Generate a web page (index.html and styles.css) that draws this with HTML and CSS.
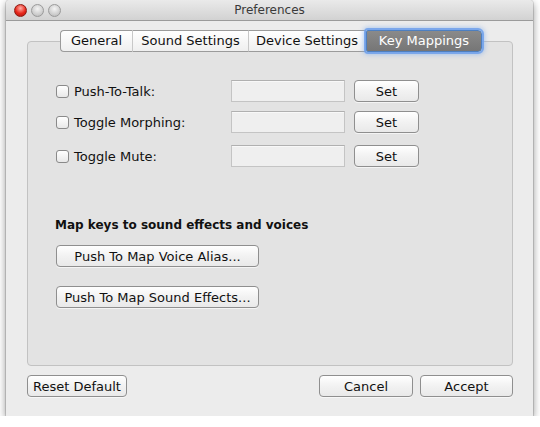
FILE: index.html
```html
<!DOCTYPE html>
<html>
<head>
<meta charset="utf-8">
<link rel="stylesheet" href="styles.css">
</head>
<body>
<div class="window">
  <div class="titlebar">
    <div class="lights">
      <span class="light red"></span>
      <span class="light"></span>
      <span class="light"></span>
    </div>
    <div class="title">Preferences</div>
  </div>
  <div class="content">
    <div class="tabs">
      <div class="tab">General</div>
      <div class="tab">Sound Settings</div>
      <div class="tab">Device Settings</div>
      <div class="tab selected">Key Mappings</div>
    </div>
    <div class="box">
      <div class="row r1">
        <label class="check"><span class="cb"></span>Push-To-Talk:</label>
        <div class="field"></div>
        <button class="btn set">Set</button>
      </div>
      <div class="row r2">
        <label class="check"><span class="cb"></span>Toggle Morphing:</label>
        <div class="field"></div>
        <button class="btn set">Set</button>
      </div>
      <div class="row r3">
        <label class="check"><span class="cb"></span>Toggle Mute:</label>
        <div class="field"></div>
        <button class="btn set">Set</button>
      </div>
      <div class="heading">Map keys to sound effects and voices</div>
      <button class="btn wide b1">Push To Map Voice Alias...</button>
      <button class="btn wide b2">Push To Map Sound Effects...</button>
    </div>
    <div class="footer">
      <button class="btn reset">Reset Default</button>
      <div class="spacer"></div>
      <button class="btn cancel">Cancel</button>
      <button class="btn accept">Accept</button>
    </div>
  </div>
</div>
</body>
</html>
```
FILE: styles.css
```css
* { box-sizing: border-box; }
html, body { margin: 0; padding: 0; background: #ffffff; }
body {
  font-family: "DejaVu Sans", "Liberation Sans", sans-serif;
  font-size: 12px;
  color: #111;
}
.window {
  margin-left: 6px;
  width: 527px;
  height: 416px;
  background: #ececec;
  border-radius: 4px 4px 0 0;
  box-shadow: 0 3px 8px rgba(0,0,0,0.45), 0 0 0 1px rgba(0,0,0,0.12);
  overflow: hidden;
}
.titlebar {
  height: 21px;
  position: relative;
  background: linear-gradient(#eaeaea, #d2d2d2);
  border-bottom: 1px solid #9b9b9b;
  display: flex;
  align-items: center;
}
.lights {
  display: flex;
  gap: 4px;
  margin-left: 8px;
  position: relative;
  z-index: 1;
}
.light {
  width: 13px;
  height: 13px;
  border-radius: 50%;
  background: radial-gradient(circle at 50% 35%, #f4f4f4, #c8c8c8 70%, #b0b0b0);
  border: 1px solid #9a9a9a;
}
.light.red {
  background: radial-gradient(circle at 50% 30%, #ffb0a8, #e8271b 55%, #a8150e);
  border-color: #8c1a12;
}
.title {
  position: absolute;
  left: 0; right: 0; top: 0; bottom: 0;
  display: flex;
  align-items: center;
  justify-content: center;
  color: #3a3a3a;
  font-size: 12px;
}
.content {
  padding: 9px 20px 0 21px;
}
.tabs {
  display: flex;
  margin-left: 33px;
  width: 422px;
  height: 22px;
  position: relative;
  z-index: 1;
  margin-bottom: -11px;
}
.tab {
  height: 22px;
  line-height: 20px;
  text-align: center;
  font-size: 13px;
  background: linear-gradient(#ffffff, #efefef);
  border: 1px solid #9b9b9b;
  border-left: none;
  color: #111;
}
.tab:nth-child(1) { width: 73px; border-left: 1px solid #9b9b9b; border-radius: 4px 0 0 4px; }
.tab:nth-child(2) { width: 116px; border-right-color: #c8c8c8; }
.tab:nth-child(3) { width: 117px; }
.tab:nth-child(1) { border-right-color: #c8c8c8; }
.tab.selected {
  width: 116px;
  background: linear-gradient(#8a8a8a, #767676);
  color: #ffffff;
  border: 1px solid #4d7fc0;
  border-radius: 2px 4px 4px 2px;
  box-shadow: 0 0 0 2px rgba(110,160,235,0.85), 0 0 4px 3px rgba(120,170,240,0.5);
}
.box {
  height: 325px;
  background: #e3e3e3;
  border: 1px solid #c2c2c2;
  border-radius: 4px;
  padding: 38px 0 0 27px;
}
.row {
  display: flex;
  align-items: center;
  height: 22px;
}
.r2 { margin-top: 9px; }
.r3 { margin-top: 12px; }
.check {
  display: flex;
  align-items: center;
  width: 176px;
  font-size: 13px;
}
.cb {
  width: 13px;
  height: 13px;
  border: 1px solid #8a8a8a;
  border-radius: 3px;
  background: linear-gradient(#ffffff, #e8e8e8);
  margin-right: 5px;
  margin-left: 1px;
}
.field {
  width: 114px;
  height: 22px;
  background: #efefef;
  border: 1px solid #c4c4c4;
  border-top-color: #b0b0b0;
  box-shadow: inset 0 1px 0 #f8f8f8;
}
.btn {
  font-family: inherit;
  font-size: 13px;
  color: #111;
  height: 22px;
  padding: 0;
  background: linear-gradient(#ffffff, #f2f2f2 50%, #e9e9e9);
  border: 1px solid #8f8f8f;
  border-radius: 4px;
  box-shadow: 0 1px 0 rgba(255,255,255,0.6);
}
.set {
  width: 65px;
  margin-left: 9px;
}
.heading {
  font-weight: bold;
  font-size: 12px;
  margin-top: 51px;
  height: 15px;
  line-height: 15px;
}
.wide {
  display: block;
  width: 203px;
}
.b1 { margin-top: 12px; margin-left: 1px; }
.b2 { margin-top: 19px; margin-left: 1px; }
.footer {
  display: flex;
  margin-top: 9px;
}
.spacer { flex: 1; }
.reset { width: 100px; }
.cancel { width: 94px; }
.accept { width: 93px; margin-left: 7px; }
```
